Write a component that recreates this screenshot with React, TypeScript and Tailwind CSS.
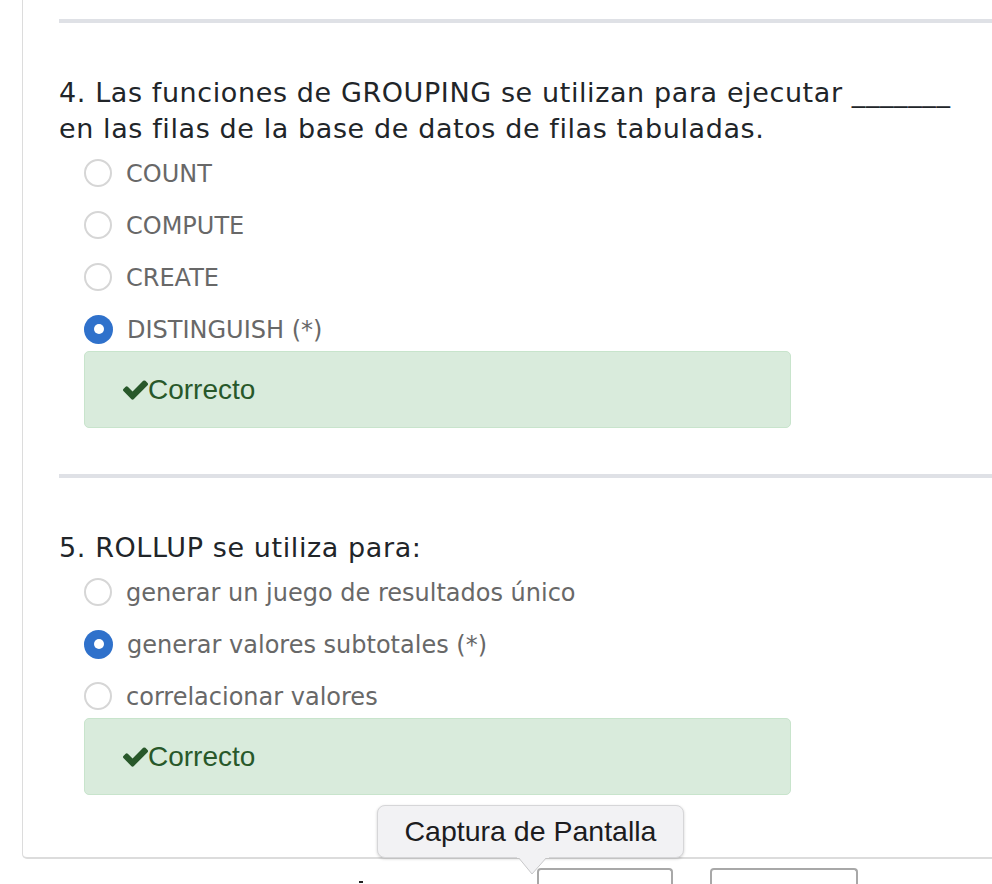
import React from 'react';

type Question = {
  title: string;
  options: string[];
  selected: number;
};

const questions: Question[] = [
  {
    title: '4. Las funciones de GROUPING se utilizan para ejecutar _______ en las filas de la base de datos de filas tabuladas.',
    options: ['COUNT', 'COMPUTE', 'CREATE', 'DISTINGUISH (*)'],
    selected: 3,
  },
  {
    title: '5. ROLLUP se utiliza para:',
    options: ['generar un juego de resultados único', 'generar valores subtotales (*)', 'correlacionar valores'],
    selected: 1,
  },
];

// font awesome 4 style check mark
const CheckIcon = () => (
  <svg width="29" height="29" viewBox="0 0 1792 1792" fill="currentColor" className="shrink-0">
    <path d="M1671 566q0 40-28 68l-724 724-136 136q-28 28-68 28t-68-28l-136-136-362-362q-28-28-28-68t28-68l136-136q28-28 68-28t68 28l294 295 656-657q28-28 68-28t68 28l136 136q28 28 28 68z" />
  </svg>
);

const Radio: React.FC<{ checked: boolean }> = ({ checked }) =>
  checked ? (
    <span className="flex h-[29px] w-[29px] shrink-0 items-center justify-center rounded-full bg-[#2f71cb]">
      <span className="h-[10px] w-[10px] rounded-full bg-white" />
    </span>
  ) : (
    <span className="h-[28px] w-[28px] shrink-0 rounded-full border-2 border-[#d6d6d6] bg-white" />
  );

const QuestionBlock: React.FC<{ q: Question }> = ({ q }) => (
  <div>
    <div className="h-[4px] w-full bg-[#dfe1e6]" />
    <h3 className="mt-[52px] w-[910px] text-[27px] leading-[36px] tracking-[0.6px] text-[#212529]">{q.title}</h3>
    <div className="mt-[12px] flex flex-col gap-[24px] pl-[25px]">
      {q.options.map((opt, i) => (
        <label key={i} className="flex h-[28px] items-center gap-[14px]">
          <Radio checked={i === q.selected} />
          <span className="pt-[2px] text-[24px] leading-[28px] text-[#686868]">{opt}</span>
        </label>
      ))}
    </div>
    <div
      className="mt-2 ml-[25px] flex h-[77px] w-[707px] items-center rounded-[5px] border border-[#c8e4cc] bg-[#d9ebdc] pl-[36px] text-[#28582a]"
      style={{ fontFamily: '"Liberation Sans", Arial, sans-serif' }}
    >
      <CheckIcon />
      <span className="ml-[-2px] text-[28px] leading-none">Correcto</span>
    </div>
  </div>
);

export default function App() {
  return (
    <div
      className="relative h-[884px] w-[992px] overflow-hidden bg-white"
      style={{ fontFamily: '"DejaVu Sans", Verdana, sans-serif' }}
    >
      <div className="ml-[22px] w-[1100px] rounded-bl-[5px] border-b-2 border-l border-[#dcdcdc] pb-[62px] pl-[36px] pt-[19px]">
        <QuestionBlock q={questions[0]} />
        <div className="mt-[46px]">
          <QuestionBlock q={questions[1]} />
        </div>
      </div>

      {/* bottom buttons, cut off by the window */}
      <div className="mt-[9px] flex items-start">
        <div className="ml-[359px] mt-[13px] h-[2px] w-[4px] bg-[#222]" />
        <div className="ml-[174px] h-[30px] w-[136px] rounded-t-[4px] border-2 border-b-0 border-[#a8a8a8] bg-white" />
        <div className="ml-[37px] h-[30px] w-[148px] rounded-t-[4px] border-2 border-b-0 border-[#a8a8a8] bg-white" />
      </div>

      {/* tooltip */}
      <div className="absolute left-[377px] top-[805px]">
        <div
          className="flex h-[53px] w-[307px] items-center justify-center rounded-[8px] border border-[#d6d6d8] bg-[#f2f2f4] shadow-[0_1px_3px_rgba(0,0,0,0.18)]"
          style={{ fontFamily: '"Liberation Sans", Arial, sans-serif' }}
        >
          <span className="text-[28.5px] leading-none text-[#1c1c1e]">Captura de Pantalla</span>
        </div>
        <svg className="absolute left-[140px] top-[51px]" width="32" height="20" viewBox="0 0 32 20">
          <path d="M1 1 L15 18 L30 1" fill="#f2f2f4" stroke="#c8c8ca" strokeWidth="1" />
          <rect x="0" y="0" width="32" height="2" fill="#f2f2f4" />
        </svg>
      </div>
    </div>
  );
}
